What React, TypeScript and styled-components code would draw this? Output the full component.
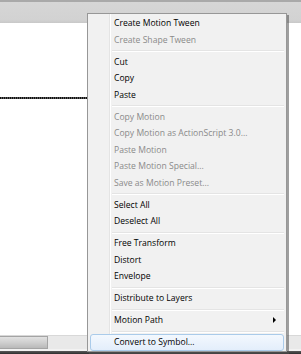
import styled, { createGlobalStyle } from 'styled-components'

type Entry = { label: string; disabled?: boolean; submenu?: boolean; active?: boolean } | 'sep'

const entries: Entry[] = [
  { label: 'Create Motion Tween' },
  { label: 'Create Shape Tween', disabled: true },
  'sep',
  { label: 'Cut' },
  { label: 'Copy' },
  { label: 'Paste' },
  'sep',
  { label: 'Copy Motion', disabled: true },
  { label: 'Copy Motion as ActionScript 3.0...', disabled: true },
  { label: 'Paste Motion', disabled: true },
  { label: 'Paste Motion Special...', disabled: true },
  { label: 'Save as Motion Preset...', disabled: true },
  'sep',
  { label: 'Select All' },
  { label: 'Deselect All' },
  'sep',
  { label: 'Free Transform' },
  { label: 'Distort' },
  { label: 'Envelope' },
  'sep',
  { label: 'Distribute to Layers' },
  'sep',
  { label: 'Motion Path', submenu: true },
  'sep',
  { label: 'Convert to Symbol...', active: true },
]

export default function App() {
  return (
    <>
      <GlobalStyle />
      <Stage>
        <TopBar />
        <Canvas>
          <StrokeLine />
        </Canvas>
        <ScrollTrack>
          <ScrollThumb />
        </ScrollTrack>
        <BottomGap />
        <BottomBar />

        <ContextMenu>
          {entries.map((e, i) =>
            e === 'sep' ? (
              <Separator key={i} />
            ) : (
              <MenuItem key={i} $disabled={e.disabled} $active={e.active}>
                <span>{e.label}</span>
                {e.submenu && <SubArrow />}
              </MenuItem>
            )
          )}
        </ContextMenu>
      </Stage>
    </>
  )
}

// styles
const GlobalStyle = createGlobalStyle`
  html, body {
    margin: 0;
    padding: 0;
    background: #ffffff;
  }
`

const Stage = styled.div`
  position: relative;
  display: flex;
  flex-direction: column;
  width: 301px;
  height: 354px;
  overflow: hidden;
  background: #ffffff;
`

const TopBar = styled.div`
  flex: 0 0 23px;
  box-sizing: border-box;
  border-top: 2px solid #a9a9a9;
  background: linear-gradient(#d6d6d6, #d2d2d2 85%, #c8c8c8);
`

const Canvas = styled.div`
  flex: 1;
  background: #ffffff;
  padding-top: 74px;
`

const StrokeLine = styled.div`
  width: 88px;
  height: 2px;
  background: repeating-linear-gradient(90deg, #111 0 1px, #5a5a5a 1px 2px);
`

const ScrollTrack = styled.div`
  flex: 0 0 13px;
  display: flex;
  background: #e9e9e9;
  border-top: 1px solid #d8d8d8;
`

const ScrollThumb = styled.div`
  width: 48px;
  box-sizing: border-box;
  border: 1px solid #a4a4a4;
  border-left: none;
  background: linear-gradient(#e2e2e2, #cfcfcf 50%, #b9b9b9);
`

const BottomGap = styled.div`
  flex: 0 0 2px;
  background: #f2f2f2;
`

const BottomBar = styled.div`
  flex: 0 0 3px;
  background: linear-gradient(#5a5a5a, #2e2e2e);
`

const ContextMenu = styled.div`
  position: absolute;
  left: 87px;
  top: 13px;
  width: 200px;
  box-sizing: border-box;
  padding: 1px 0 0;
  border: 1px solid #979797;
  box-shadow: 2px 2px 0 rgba(80, 80, 80, 0.55);
  background: linear-gradient(
    to right,
    #f1f1f1 21px,
    #e4e4e4 21px,
    #e4e4e4 22px,
    #ffffff 22px,
    #ffffff 23px,
    #f1f1f1 23px
  );
  font-family: "Open Sans", "Noto Sans", sans-serif;
  font-size: 8.6px;
`

const MenuItem = styled.div<{ $disabled?: boolean; $active?: boolean }>`
  display: flex;
  align-items: center;
  justify-content: space-between;
  height: 16.5px;
  margin: 0 2px;
  padding: 0 7px 0 23px;
  box-sizing: border-box;
  border-radius: 3px;
  border: 1px solid ${(p) => (p.$active ? '#aacbea' : 'transparent')};
  background: ${(p) => (p.$active ? 'linear-gradient(#f3f8fe, #e3eefb)' : 'transparent')};
  color: ${(p) => (p.$disabled ? '#8a8a8a' : '#000000')};
  white-space: nowrap;
`

const Separator = styled.div`
  height: 5.5px;
  margin-left: 24px;
  margin-right: 2px;
  background: linear-gradient(
    transparent 2px,
    #e4e4e4 2px,
    #e4e4e4 3px,
    #ffffff 3px,
    #ffffff 4px,
    transparent 4px
  );
`

const SubArrow = styled.span`
  width: 0;
  height: 0;
  border-left: 3.5px solid #000;
  border-top: 3px solid transparent;
  border-bottom: 3px solid transparent;
`
